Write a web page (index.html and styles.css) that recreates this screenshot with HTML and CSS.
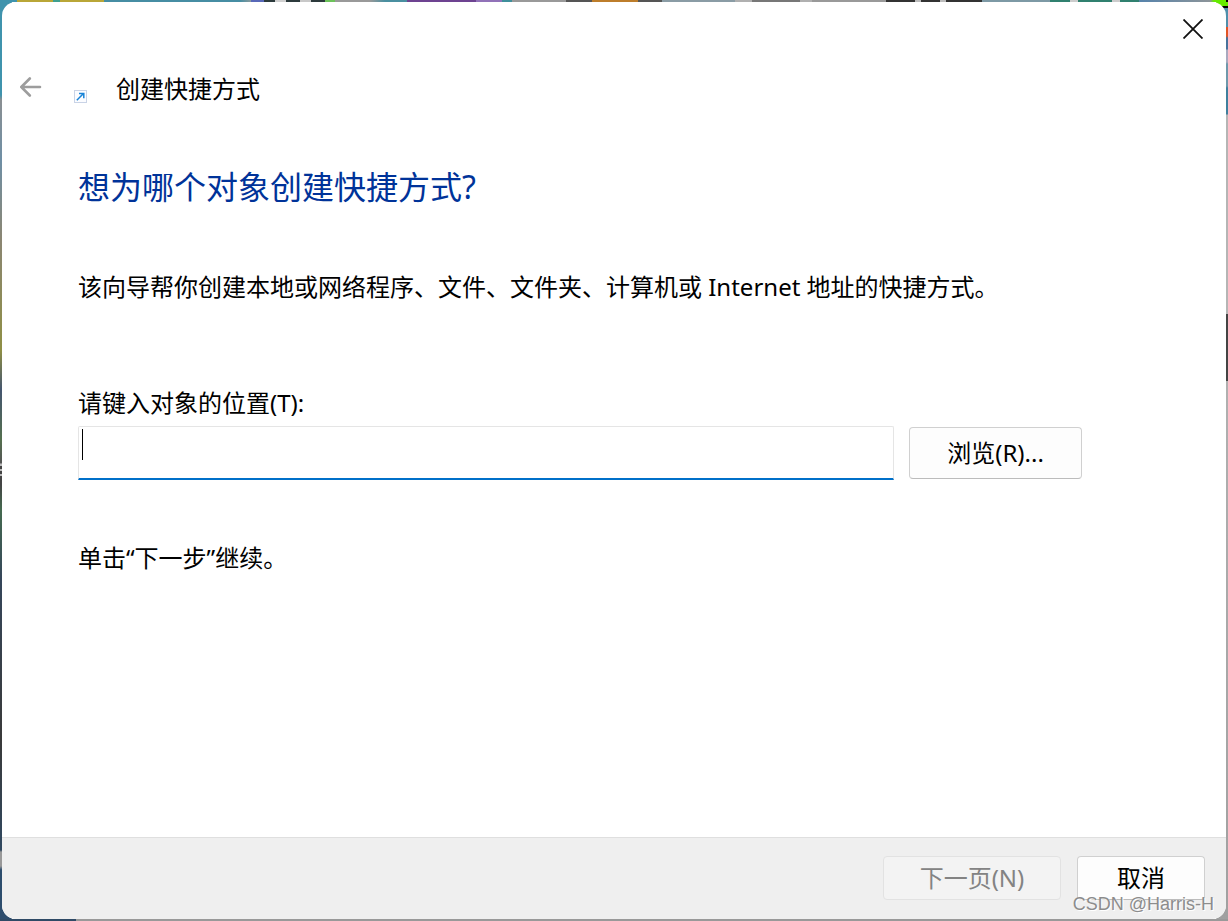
FILE: index.html
```html
<!DOCTYPE html>
<html lang="zh-CN">
<head>
  <meta charset="UTF-8">
  <meta name="viewport" content="width=device-width, initial-scale=1.0">
  <title>创建快捷方式</title>
  <link rel="stylesheet" href="styles.css">
</head>
<body>

  <form class="dialog">
    <!-- TITLE BAR -->
    <div class="title-bar">
      <button type="button" class="close-btn" aria-label="关闭">
        <svg width="20" height="20" viewBox="0 0 20 20" fill="none" stroke="#111" stroke-width="1.8">
          <path d="M0.5 0.5L19.5 19.5M19.5 0.5L0.5 19.5"/>
        </svg>
      </button>
    </div>

    <header class="wizard-header">
      <button type="button" class="back-btn" aria-label="返回" disabled>
        <svg width="22" height="20" viewBox="0 0 22 20" fill="none" stroke="#9d9d9d" stroke-width="2.6" stroke-linecap="round" stroke-linejoin="round">
          <path d="M9.8 1.5L1.3 10L9.8 18.5M1.3 10H20"/>
        </svg>
      </button>
      <svg class="shortcut-icon" width="14" height="14" viewBox="0 0 14 14">
        <rect x="0.5" y="0.5" width="12" height="12" fill="#fbfcff" stroke="#c9d3e6"/>
        <path d="M2.8 10.2L9 4M5 3.4H9.8V8.2" fill="none" stroke="#1883d7" stroke-width="1.5"/>
      </svg>
      <span class="wizard-title">创建快捷方式</span>
    </header>

    <!-- PAGE CONTENT -->
    <main class="content">
      <h1>想为哪个对象创建快捷方式?</h1>
      <p class="intro">该向导帮你创建本地或网络程序、文件、文件夹、计算机或 Internet 地址的快捷方式。</p>

      <label for="location">请键入对象的位置(T):</label>
      <div class="location-row">
        <div class="field">
          <input type="text" id="location">
          <span class="caret"></span>
        </div>
        <button type="button" class="btn browse-btn">浏览(R)...</button>
      </div>

      <p class="hint">单击“下一步”继续。</p>
    </main>

    <footer class="actions">
      <button type="submit" class="btn next-btn" disabled>下一页(N)</button>
      <button type="button" class="btn cancel-btn">取消</button>
    </footer>
  </form>

  <div class="watermark">CSDN @Harris-H</div>

</body>
</html>
```
FILE: styles.css
```css
* {
  box-sizing: border-box;
}
body {
  margin: 0;
  padding: 2px;
  min-height: 100vh;
  display: flex;
  position: relative;
  font-family: "Noto Sans", "Noto Sans CJK SC", sans-serif;
  font-size: 24px;
  line-height: 32px;
  color: #000;
  /* desktop showing round the window: top, bottom, left, right */
  background:
    linear-gradient(90deg, #3f93ad 17px, #b9a637 17px 53px, #3f9f8f 53px 60px, #b9a637 60px 104px, #468da3 104px 240px, #8a9a9c 251px, #5868b8 251px 264px, #2c3a3c 264px 275px, #d0d0d0 275px 286px, #2c3a3c 286px 300px, #c8c8c8 300px 311px, #2c3a3c 311px 325px, #6cc25a 325px 335px, #999 335px 370px, #4a8fa0 385px 407px, #6d4391 407px 476px, #9172b8 476px 502px, #3f8f9b 502px 512px, #999 512px 566px, #555 566px 592px, #bd7d2b 592px 638px, #555 638px 662px, #8a9ca5 662px 735px, #b0b0b0 735px 752px, #777 752px 800px, #b0b0b0 800px 812px, #999 812px 886px, #333 886px 915px, #bbb 915px 921px, #333 921px 940px, #bbb 940px 946px, #333 946px 982px, #7d99a5 982px 1050px, #30806f 1050px 1070px, #ccc 1070px 1078px, #30806f 1078px 1112px, #ccc 1112px 1120px, #30806f 1120px 1139px, #5683ab 1139px, #8c9499 1210px, #66ea00 1214px 1226px, #000 1226px) top / 100% 2px no-repeat,
    linear-gradient(90deg, #2f4a66 76px, #999 76px) bottom / 100% 2px no-repeat,
    linear-gradient(#3f93ad 95px, #8a8f92 100px, #6f8fa5 160px, #8b8672 240px, #8f8f45 350px, #45566f 390px, #55704f 440px, #555 463px, #bbb 464px 466px, #444 466px 469px, #bbb 469px 471px, #444 471px 474px, #bbb 474px 476px, #444 476px 484px, #456a50 510px, #35465a 580px, #3a3a3a 740px, #304860 850px, #999 852px 866px, #2d4d6d 870px) left / 12px 100% no-repeat,
    linear-gradient(#66ea00 6px, #000 6px 8px, #4f8fab 8px 27px, #e25424 27px 36px, #47719b 38px 49px, #a9a9bf 50px 62px, #6f98ab 64px 86px, #3f7f9d 88px 114px, #b5b5b5 115px 314px, #444 314px 381px, #b0b0b0 381px, #a0a0a0) right / 12px 100% no-repeat;
}
.dialog {
  flex: 1;
  display: flex;
  flex-direction: column;
  background: #fff;
  border-radius: 14px;
  overflow: hidden;
}
.title-bar {
  display: flex;
  justify-content: flex-end;
  padding: 12px 18px;
}
.close-btn,
.back-btn {
  display: flex;
  align-items: center;
  justify-content: center;
  padding: 0;
  border: none;
  background: none;
}
.close-btn {
  width: 30px;
  height: 30px;
}
.wizard-header {
  display: flex;
  align-items: center;
  padding: 17px 18px 0;
}
.back-btn {
  margin-bottom: 4px;
}
.shortcut-icon {
  margin: 16px 28px 0 32px;
}
.content {
  flex: 1;
  padding: 60px 144px 0 76px;
}
h1 {
  margin: 0;
  font-size: 32px;
  line-height: 44px;
  font-weight: 400;
  color: #003399;
}
p {
  margin: 0;
}
.intro {
  margin-top: 62px;
  margin-bottom: 84px;
}
label {
  display: block;
}
.location-row {
  display: flex;
  align-items: center;
  gap: 15px;
  margin-top: 7px;
}
.field {
  flex: 1;
  position: relative;
}
input {
  display: block;
  width: 100%;
  height: 54px;
  padding: 0 4px;
  border: 1px solid #e5e5e5;
  border-bottom: 2px solid #0070c9;
  border-radius: 2px 2px 0 0;
  font: inherit;
  outline: none;
}
.caret {
  position: absolute;
  top: 3px;
  left: 4px;
  width: 1px;
  height: 31px;
  background: #000;
}
.btn {
  padding: 0;
  border: 1px solid #d0d0d0;
  border-bottom-color: #bcbcbc;
  border-radius: 4px;
  background: #fdfdfd;
  font: inherit;
  color: #000;
}
.browse-btn {
  width: 173px;
  height: 52px;
}
.hint {
  margin-top: 62px;
}
.actions {
  display: flex;
  justify-content: flex-end;
  gap: 16px;
  padding: 18px 21px 19px;
  border-top: 1px solid #dfdfdf;
  background: #efefef;
}
.next-btn,
.cancel-btn {
  height: 44px;
}
.next-btn {
  width: 178px;
  border-color: #e2e2e2;
  background: #f3f3f3;
  color: #838383;
}
.cancel-btn {
  width: 128px;
}
.watermark {
  position: absolute;
  right: 14px;
  bottom: 6px;
  font-family: "Liberation Sans", sans-serif;
  font-size: 18px;
  line-height: 22px;
  color: #8c8c8c;
  text-shadow: 1px 1px 0 #fff;
}
```
